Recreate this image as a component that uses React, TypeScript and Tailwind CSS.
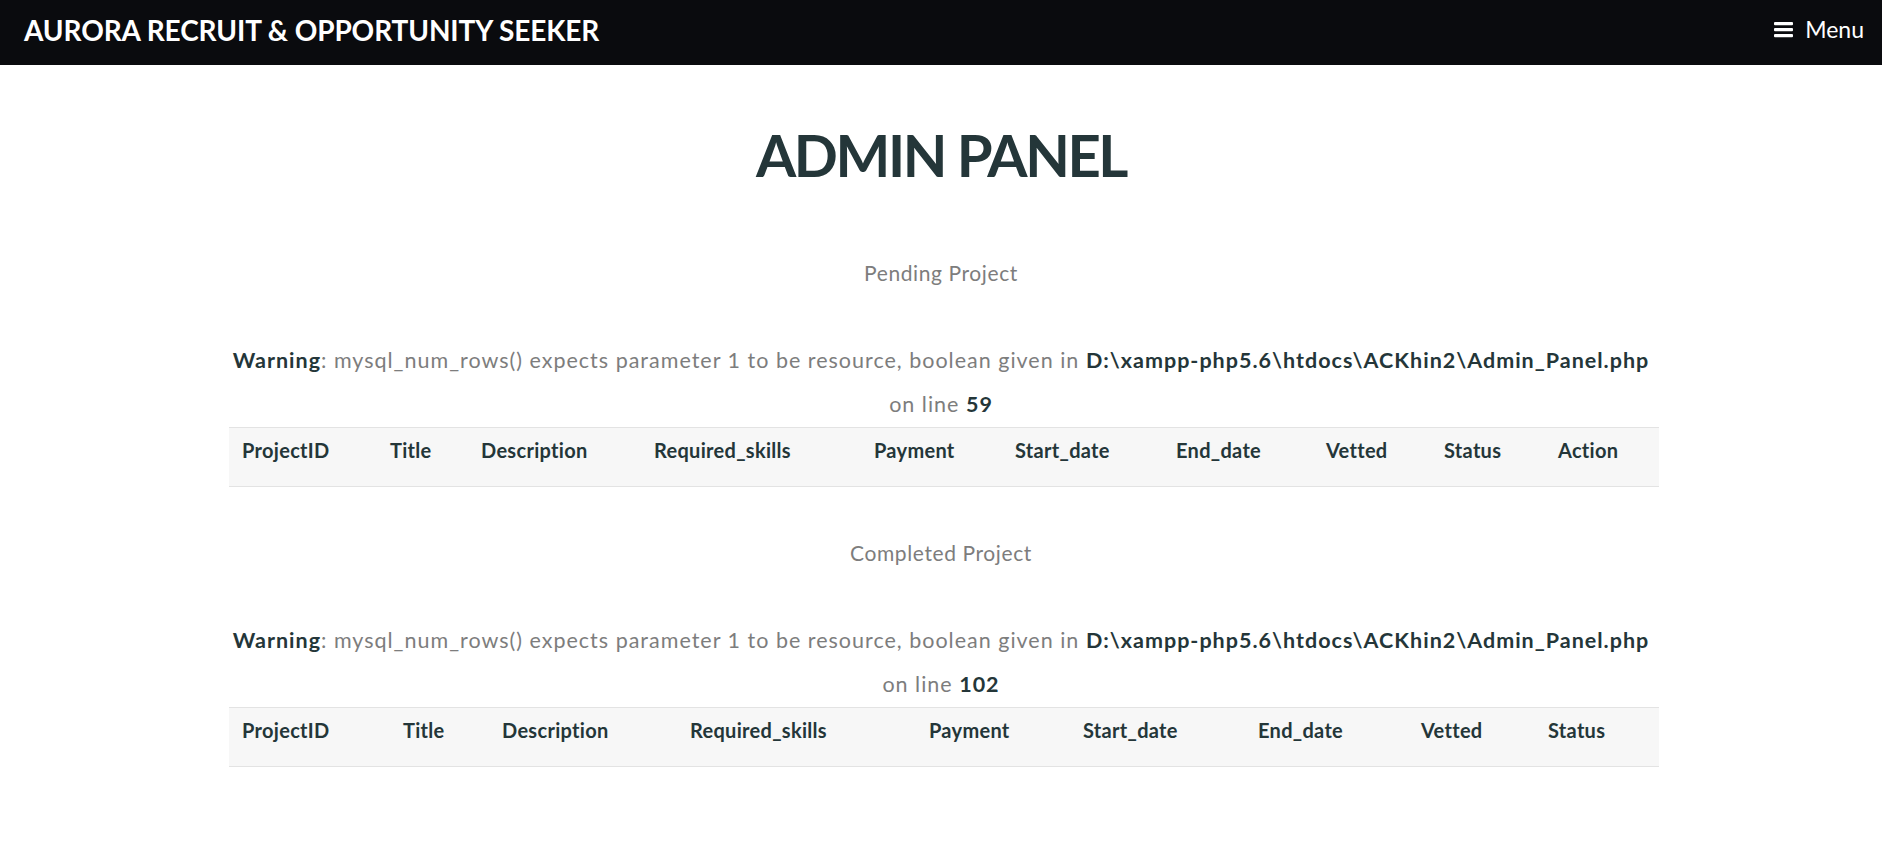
import React from "react";

const font = { fontFamily: "Lato, 'Open Sans', sans-serif" };

type Section = {
  title: string;
  line: string;
  cols: { name: string; w: number }[];
};

const sections: Section[] = [
  {
    title: "Pending Project",
    line: "59",
    cols: [
      { name: "ProjectID", w: 148 },
      { name: "Title", w: 91 },
      { name: "Description", w: 173 },
      { name: "Required_skills", w: 220 },
      { name: "Payment", w: 141 },
      { name: "Start_date", w: 161 },
      { name: "End_date", w: 150 },
      { name: "Vetted", w: 118 },
      { name: "Status", w: 114 },
      { name: "Action", w: 114 },
    ],
  },
  {
    title: "Completed Project",
    line: "102",
    cols: [
      { name: "ProjectID", w: 161 },
      { name: "Title", w: 99 },
      { name: "Description", w: 188 },
      { name: "Required_skills", w: 239 },
      { name: "Payment", w: 154 },
      { name: "Start_date", w: 175 },
      { name: "End_date", w: 163 },
      { name: "Vetted", w: 127 },
      { name: "Status", w: 124 },
    ],
  },
];

const ProjectTable: React.FC<Section> = ({ title, line, cols }) => {
  return (
    <div className="mb-[52px]">
      <p className="text-center text-[21px] leading-[28px] tracking-[0.6px] text-[#7d7d7d] mb-[51px]">
        {title}
      </p>
      <p className="text-center text-[21.5px] leading-[44px] tracking-[1px] text-[#7d7d7d]">
        <b className="font-bold text-[#243639]">Warning</b>: mysql_num_rows()
        expects parameter 1 to be resource, boolean given in{" "}
        <b className="font-bold text-[#243639]">
          D:\xampp-php5.6\htdocs\ACKhin2\Admin_Panel.php
        </b>
        <br />
        on line <b className="font-bold text-[#243639]">{line}</b>
      </p>
      <table className="w-[1430px] ml-[229px] mt-[1px] table-fixed border-collapse">
        <colgroup>
          {cols.map((c) => (
            <col key={c.name} style={{ width: c.w }} />
          ))}
        </colgroup>
        <thead>
          <tr className="bg-[#f7f7f7] border-t border-b border-[#e3e3e3]">
            {cols.map((c) => (
              <th
                key={c.name}
                className="text-left align-top font-bold text-[20px] tracking-[0.3px] text-[#243639] px-[13px] pt-[10px] pb-[24px] leading-[24px]"
              >
                {c.name}
              </th>
            ))}
          </tr>
        </thead>
      </table>
    </div>
  );
};

export default function App() {
  return (
    <div className="min-h-screen bg-white" style={font}>
      <nav className="h-[65px] bg-[#0a0b0e] pl-[24px] pr-[18px] pb-[6px] flex items-center justify-between">
        <span className="text-white font-bold text-[28px] tracking-[-0.1px]">
          AURORA RECRUIT &amp; OPPORTUNITY SEEKER
        </span>
        <span className="flex items-center gap-[12px] text-white text-[23px]">
          <svg width="19" height="17" viewBox="0 0 19 17" fill="white">
            <rect x="0" y="1" width="19" height="3.2" rx="1" />
            <rect x="0" y="7" width="19" height="3.2" rx="1" />
            <rect x="0" y="13" width="19" height="3.2" rx="1" />
          </svg>
          Menu
        </span>
      </nav>
      <main className="pt-[50px]">
        <h1 className="text-center font-bold text-[58px] leading-[80px] text-[#243639] tracking-[-2.4px] mb-[64px]">
          ADMIN PANEL
        </h1>
        {sections.map((s) => (
          <ProjectTable key={s.title} {...s} />
        ))}
      </main>
    </div>
  );
}
